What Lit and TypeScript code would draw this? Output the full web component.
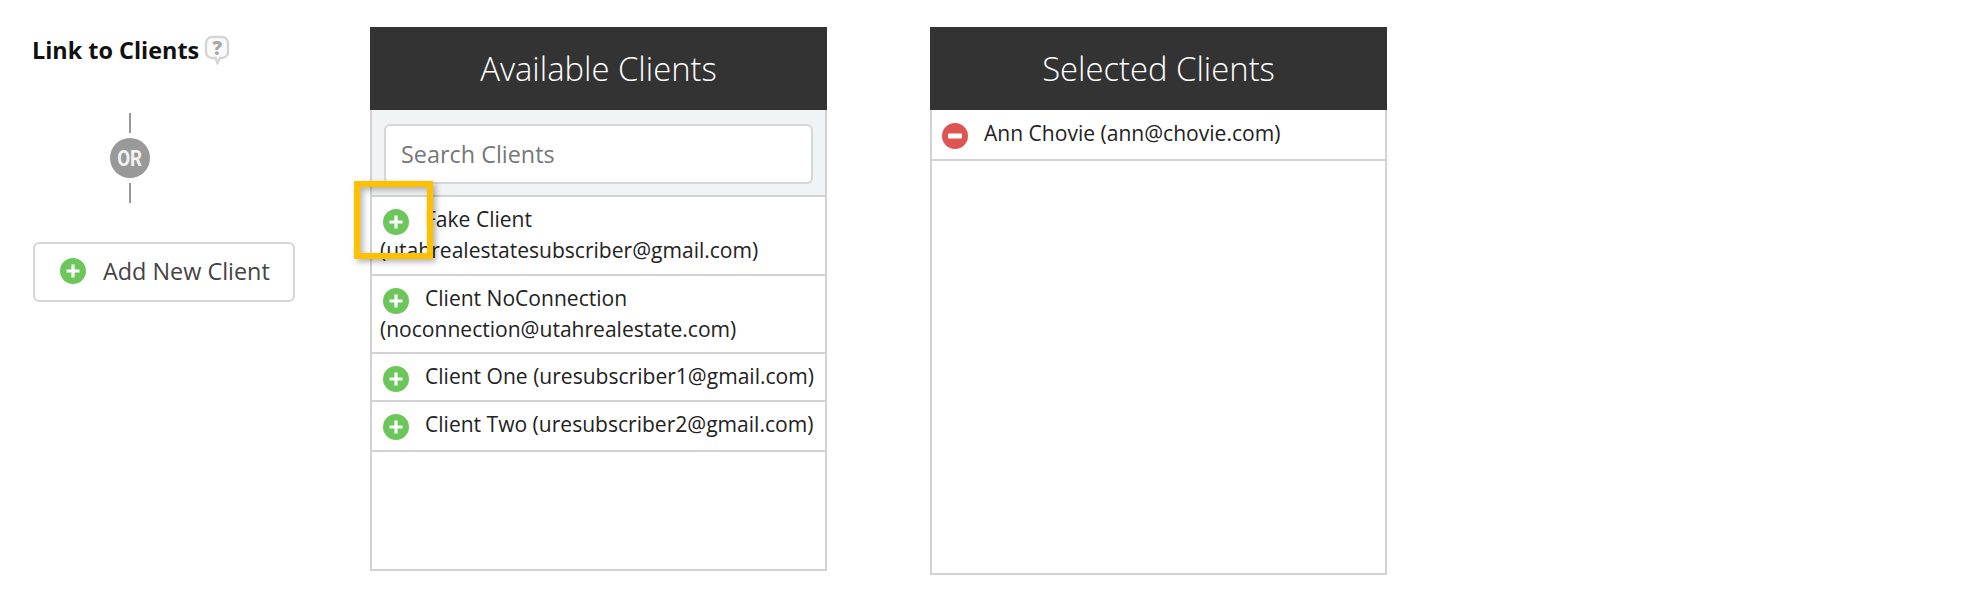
import { LitElement, css, html, nothing } from 'lit';
import { customElement } from 'lit/decorators.js';

const available = [
  { label: 'Fake Client (utahrealestatesubscriber@gmail.com)', highlight: true },
  { label: 'Client NoConnection (noconnection@utahrealestate.com)', highlight: false },
  { label: 'Client One (uresubscriber1@gmail.com)', highlight: false },
  { label: 'Client Two (uresubscriber2@gmail.com)', highlight: false },
];

const plusIcon = html`<svg class="icon" viewBox="0 0 26 26">
  <circle cx="13" cy="13" r="13" fill="#6cc65a"></circle>
  <path d="M13 6.5v13M6.5 13h13" stroke="#fff" stroke-width="3.2"></path>
</svg>`;

const minusIcon = html`<svg class="icon" viewBox="0 0 26 26">
  <circle cx="13" cy="13" r="13" fill="#de5454"></circle>
  <rect x="6" y="10.5" width="14" height="5" rx="1" fill="#fff"></rect>
</svg>`;

@customElement('app-root')
export class AppRoot extends LitElement {
  render() {
    return html`
      <div class="page">
        <aside class="side">
          <div class="title">
            Link to Clients
            <span class="help">
              <svg viewBox="0 0 26 30" width="26" height="30">
                <path
                  d="M8 2h10a6 6 0 0 1 6 6v9a6 6 0 0 1-6 6h-2l-2.500 5-2-5H8a6 6 0 0 1-6-6V8a6 6 0 0 1 6-6z"
                  fill="#fafafa"
                  stroke="#d4d4d4"
                  stroke-width="2.400"
                ></path>
              </svg>
              <b>?</b>
            </span>
          </div>
          <div class="or">
            <i></i>
            <span><em>OR</em></span>
            <i></i>
          </div>
          <button class="add" type="button">${plusIcon}<span>Add New Client</span></button>
        </aside>

        <section class="panel available">
          <header>Available Clients</header>
          <div class="search"><input type="text" placeholder="Search Clients" /></div>
          <ul>
            ${available.map(
              (c) => html`<li>
                ${plusIcon}${c.label}${c.highlight ? html`<div class="mark"></div>` : nothing}
              </li>`
            )}
          </ul>
        </section>

        <section class="panel selected">
          <header>Selected Clients</header>
          <ul>
            <li>${minusIcon}Ann Chovie (ann@chovie.com)</li>
          </ul>
        </section>
      </div>
    `;
  }

  static styles = css`
    :host {
      display: block;
      background: #fff;
      font-family: 'Open Sans', sans-serif;
      color: #222;
    }

    .page {
      display: flex;
      align-items: flex-start;
      height: 596px;
      box-sizing: border-box;
      padding: 27px 0 0 32px;
    }

    .side {
      width: 338px;
      flex: none;
    }

    .title {
      display: flex;
      align-items: center;
      gap: 5px;
      height: 46px;
      font-weight: 700;
      font-size: 23.4px;
      color: #111;
    }

    .help {
      position: relative;
      display: flex;
      margin-top: -1px;
    }

    .help b {
      position: absolute;
      left: 0;
      right: 0;
      top: 2px;
      text-align: center;
      font-size: 19px;
      line-height: 22px;
      color: #a8a8a8;
    }

    .or {
      display: flex;
      flex-direction: column;
      align-items: center;
      gap: 5px;
      width: 40px;
      margin: 40px 0 0 78px;
    }

    .or i {
      width: 2px;
      height: 20px;
      background: #999;
    }

    .or span {
      display: flex;
      align-items: center;
      justify-content: center;
      width: 40px;
      height: 40px;
      border-radius: 50%;
      background: #999;
    }

    .or em {
      color: #f2f2f2;
      font-family: Roboto, sans-serif;
      font-style: normal;
      font-weight: 700;
      font-size: 22px;
      transform: scaleX(0.85);
    }

    .add {
      display: flex;
      align-items: center;
      gap: 17px;
      width: 262px;
      height: 60px;
      margin: 39px 0 0 1px;
      padding: 0 0 2px 25px;
      box-sizing: border-box;
      background: #fff;
      border: 2px solid #d6d6d6;
      border-radius: 6px;
      font: 400 23.4px 'Open Sans', sans-serif;
      color: #444;
    }

    .panel {
      width: 457px;
      flex: none;
      box-sizing: border-box;
      border: 2px solid #d2d2d2;
      border-top: 0;
    }

    .available {
      height: 544px;
    }

    .selected {
      height: 548px;
      margin-left: 103px;
    }

    header {
      height: 83px;
      margin: 0 -2px;
      background: #333;
      color: #fff;
      font-weight: 300;
      font-size: 32.8px;
      line-height: 84px;
      text-align: center;
    }

    .search {
      height: 87px;
      box-sizing: border-box;
      padding: 14px 12px 0;
      background: #f1f4f5;
      border-bottom: 2px solid #d2d2d2;
    }

    .search input {
      display: block;
      width: 100%;
      height: 60px;
      box-sizing: border-box;
      padding: 0 15px;
      border: 2px solid #d6d6d6;
      border-radius: 6px;
      background: #fff;
      outline: none;
      font: 400 23.4px 'Open Sans', sans-serif;
    }

    .search input::placeholder {
      color: #777;
      opacity: 1;
    }

    ul {
      margin: 0;
      padding: 0;
      list-style: none;
    }

    li {
      position: relative;
      padding: 7px 0 7.5px 8px;
      border-bottom: 2px solid #d2d2d2;
      font-size: 21.05px;
      line-height: 31px;
      color: #222;
    }

    .available li:last-child {
      padding-bottom: 10.5px;
    }

    .selected li {
      padding: 8px 0 10px 11px;
    }

    .icon {
      display: inline-block;
      width: 26px;
      height: 26px;
      flex: none;
      margin: -4px 16px -4px 3px;
      vertical-align: -4px;
    }

    .add .icon {
      margin: 0;
    }

    .selected .icon {
      margin: -4px 16px -4px -1px;
    }

    .mark {
      position: absolute;
      left: -18px;
      top: -16px;
      width: 79px;
      height: 78px;
      box-sizing: border-box;
      border: 6px solid #ffc000;
      box-shadow: 3px 3px 6px rgba(0, 0, 0, 0.3), inset 3px 3px 6px rgba(0, 0, 0, 0.3);
    }
  `;
}

declare global {
  interface HTMLElementTagNameMap {
    'app-root': AppRoot;
  }
}
